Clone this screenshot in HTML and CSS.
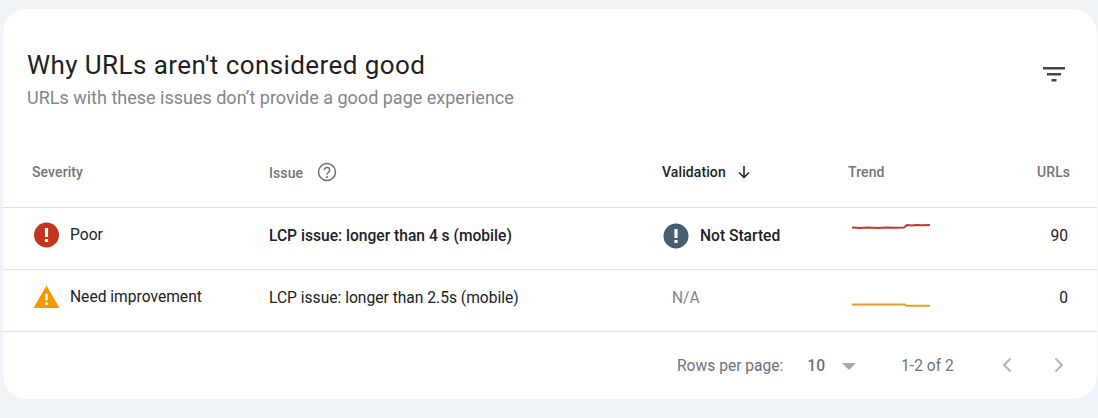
FILE: index.html
```html
<!DOCTYPE html>
<html>
    <head>
        <title>Why URLs aren't considered good</title>
        <link rel="stylesheet" href="styles.css">
    </head>
    <body>
        <div class="card">
            <div class="card-head">
                <div>
                    <div class="title">Why URLs aren't considered good</div>
                    <div class="subtitle">URLs with these issues don’t provide a good page experience</div>
                </div>
                <svg class="filter-icon" width="24" height="24" viewBox="0 0 24 24"><path d="M1 5h22v2.4H1zM5 11h14v2.4H5zM9.500 17h5v2.400h-5z" fill="#444746"/></svg>
            </div>

            <div class="row row-head">
                <div class="cell-severity">Severity</div>
                <div class="cell-issue issue-head">
                    <span class="issue-label">Issue</span>
                    <svg width="20" height="20" viewBox="0 0 20 20" fill="none" stroke="#6f6f6f" stroke-width="1.500"><circle cx="10" cy="10" r="8.500"/><path d="M7.300 8a2.700 2.600 0 1 1 4.300 2.100c-1 .8-1.600 1.200-1.600 2.600"/><path d="M9.100 14.300h1.800v1.700H9.100z" fill="#6f6f6f" stroke="none"/></svg>
                </div>
                <div class="cell-validation validation-head">
                    <span>Validation</span>
                    <svg width="14" height="14" viewBox="0 0 14 14" fill="none" stroke="#202124" stroke-width="1.500"><path d="M7 1v11.500M2 7.500l5 5 5-5"/></svg>
                </div>
                <div class="cell-trend">Trend</div>
                <div class="cell-urls">URLs</div>
            </div>

            <div class="row row-body">
                <div class="cell-severity severity">
                    <svg width="26" height="26" viewBox="0 0 26 26"><circle cx="13" cy="13" r="12.500" fill="#c5321f"/><path d="M11.400 6h3.200v9h-3.200zM11.400 17h3.200v3h-3.200z" fill="#fff"/></svg>
                    <span>Poor</span>
                </div>
                <div class="cell-issue strong">LCP issue: longer than 4 s (mobile)</div>
                <div class="cell-validation status strong">
                    <svg width="26" height="26" viewBox="0 0 26 26"><circle cx="13" cy="13" r="12.500" fill="#455f6e"/><path d="M11.400 6h3.200v9h-3.200zM11.400 17h3.200v3h-3.200z" fill="#fff"/></svg>
                    <span>Not Started</span>
                </div>
                <div class="cell-trend">
                    <svg class="spark spark-poor" width="78" height="20" viewBox="0 0 78 20" fill="none" stroke="#c0392b" stroke-width="2"><path d="M0 8.500l8 .5 8-.5 10 .5 8-.5 10 .3 8-.3 3-2.500 5 .5 4-.5 6 .3 8-.3"/></svg>
                </div>
                <div class="cell-urls count">90</div>
            </div>

            <div class="row row-body">
                <div class="cell-severity severity">
                    <svg width="28" height="26" viewBox="0 0 28 26"><path d="M14 1L27.500 24.500H.5z" fill="#f29900"/><path d="M12.800 9.500h2.400v7h-2.400zM12.800 18.500h2.400v2.700h-2.400z" fill="#fff"/></svg>
                    <span>Need improvement</span>
                </div>
                <div class="cell-issue">LCP issue: longer than 2.5s (mobile)</div>
                <div class="cell-validation na">N/A</div>
                <div class="cell-trend">
                    <svg class="spark spark-warn" width="78" height="20" viewBox="0 0 78 20" fill="none" stroke="#e8a01c" stroke-width="2"><path d="M0 8.500h53l1 1.300h24"/></svg>
                </div>
                <div class="cell-urls count">0</div>
            </div>

            <div class="pager">
                <span>Rows per page:</span>
                <span class="per-page">10</span>
                <span class="caret"></span>
                <span class="range">1-2 of 2</span>
                <svg class="chev" width="12" height="16" viewBox="0 0 12 16" fill="none" stroke="#b5b5b5" stroke-width="2"><path d="M9.500 1.500L3 8l6.500 6.500"/></svg>
                <svg class="chev chev-next" width="12" height="16" viewBox="0 0 12 16" fill="none" stroke="#b5b5b5" stroke-width="2"><path d="M2.500 1.500L9 8l-6.500 6.500"/></svg>
            </div>
        </div>
    </body>
</html>
```

FILE: styles.css
```css
html, body {
    height: 100%;
    margin: 0;
    overflow: hidden;
    background: #f0f3f8;
    font-family: Roboto, "Liberation Sans", sans-serif;
}

.card {
    box-sizing: border-box;
    height: 390px;
    margin: 9px 1px 0 3px;
    background: #fff;
    border-radius: 24px;
}

.card-head {
    display: flex;
    justify-content: space-between;
    box-sizing: border-box;
    padding: 39px 31px 0 24px;
    height: 109px;
}

.title {
    font-size: 26px;
    line-height: 34px;
    letter-spacing: 0.42px;
    color: #1f1f1f;
}

.subtitle {
    font-size: 18px;
    line-height: 24px;
    margin-top: 4px;
    color: #80868b;
}

.filter-icon {
    margin-top: 14px;
}

.row {
    display: grid;
    grid-template-columns: 266px 393px 186px 1fr 60px;
    align-items: center;
    border-bottom: 1px solid #e0e0e0;
    box-sizing: border-box;
}

.row-head {
    height: 90px;
    padding-top: 19px;
    font-size: 14px;
    font-weight: 500;
    letter-spacing: 0.1px;
    color: #757575;
}

.row-body {
    height: 62px;
    padding-bottom: 6px;
    font-size: 15.6px;
    color: #202124;
}

.cell-severity {
    padding-left: 29px;
}

.issue-head, .validation-head, .severity, .status {
    display: flex;
    align-items: center;
}

.issue-head {
    gap: 14px;
}

.issue-label {
    padding-top: 2px;
}

.validation-head {
    gap: 11px;
    color: #202124;
}

.severity {
    padding-left: 30px;
    padding-bottom: 2px;
    gap: 10px;
}

.severity svg {
    width: 27px;
}

.status {
    gap: 11px;
    margin-left: 1px;
}

.strong {
    font-weight: 500;
}

.na {
    padding-left: 10px;
    color: #80868b;
}

.cell-urls {
    text-align: right;
    padding-right: 29px;
}

.spark {
    display: block;
    margin-left: 4px;
}

.spark-poor {
    margin-top: -13px;
}

.spark-warn {
    margin-top: 17px;
}

.pager {
    display: flex;
    align-items: center;
    height: 68px;
    padding-left: 674px;
    font-size: 15.6px;
    color: #6f7377;
}

.per-page {
    margin-left: 24px;
    font-weight: 500;
}

.caret {
    width: 0;
    height: 0;
    margin-left: 17px;
    border-left: 7px solid transparent;
    border-right: 7px solid transparent;
    border-top: 7px solid #a8a8a8;
}

.range {
    margin-left: 45px;
}

.chev {
    margin-left: 47px;
    margin-top: -2px;
}

.chev-next {
    margin-left: 40px;
}
```
